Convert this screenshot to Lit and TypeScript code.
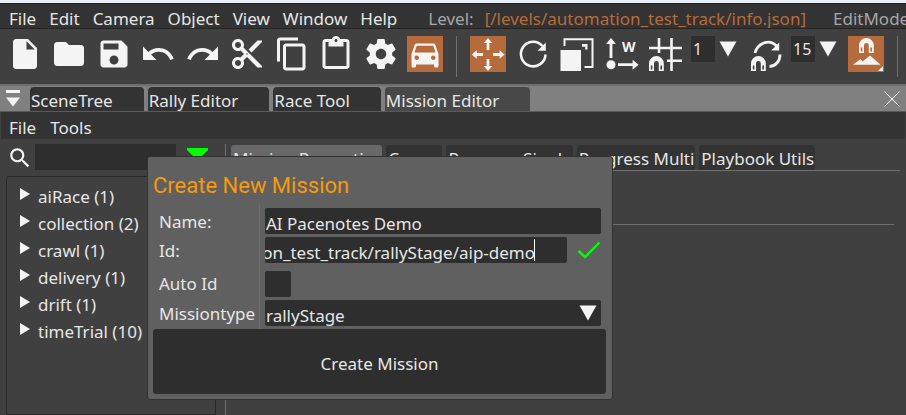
import { LitElement, html, svg, css } from "lit";
import { customElement, state } from "lit/decorators.js";
import { classMap } from "lit/directives/class-map.js";

const material: Record<string, string> = {
  file: "M6 2c-1.1 0-1.99.9-1.99 2L4 20c0 1.1.89 2 1.99 2H18c1.1 0 2-.9 2-2V8l-6-6H6zm7 7V3.5L18.5 9H13z",
  folder: "M10 4H4c-1.1 0-1.99.9-1.99 2L2 18c0 1.1.9 2 2 2h16c1.1 0 2-.9 2-2V8c0-1.1-.9-2-2-2h-8l-2-2z",
  save: "M17 3H5c-1.11 0-2 .9-2 2v14c0 1.1.89 2 2 2h14c1.1 0 2-.9 2-2V7l-4-4zm-5 16c-1.66 0-3-1.34-3-3s1.34-3 3-3 3 1.34 3 3-1.34 3-3 3zm3-10H5V5h10v4z",
  undo: "M12.5 8c-2.65 0-5.05.99-6.9 2.6L2 7v9h9l-3.62-3.62c1.39-1.16 3.16-1.88 5.12-1.88 3.54 0 6.55 2.31 7.6 5.5l2.37-.78C21.08 11.03 17.15 8 12.5 8z",
  redo: "M18.4 10.6C16.55 8.99 14.15 8 11.5 8c-4.65 0-8.58 3.03-9.96 7.22L3.9 16c1.05-3.19 4.05-5.5 7.6-5.5 1.95 0 3.73.72 5.12 1.88L13 16h9V7l-3.6 3.6z",
  cut: "M9.64 7.64c.23-.5.36-1.05.36-1.64 0-2.21-1.79-4-4-4S2 3.79 2 6s1.79 4 4 4c.59 0 1.14-.13 1.64-.36L10 12l-2.36 2.36C7.14 14.13 6.59 14 6 14c-2.21 0-4 1.79-4 4s1.79 4 4 4 4-1.79 4-4c0-.59-.13-1.14-.36-1.64L12 14l7 7h3v-1L9.64 7.64zM6 8c-1.1 0-2-.89-2-2s.9-2 2-2 2 .89 2 2-.9 2-2 2zm0 12c-1.1 0-2-.89-2-2s.9-2 2-2 2 .89 2 2-.9 2-2 2zm6-7.5c-.28 0-.5-.22-.5-.5s.22-.5.5-.5.5.22.5.5-.22.5-.5.5zM19 3l-6 6 2 2 7-7V3z",
  copy: "M16 1H4c-1.1 0-2 .9-2 2v14h2V3h12V1zm3 4H8c-1.1 0-2 .9-2 2v14c0 1.1.9 2 2 2h11c1.1 0 2-.9 2-2V7c0-1.1-.9-2-2-2zm0 16H8V7h11v14z",
  paste: "M19 2h-4.18C14.4.84 13.3 0 12 0c-1.3 0-2.4.84-2.82 2H5c-1.1 0-2 .9-2 2v16c0 1.1.9 2 2 2h14c1.1 0 2-.9 2-2V4c0-1.1-.9-2-2-2zm-7 0c.55 0 1 .45 1 1s-.45 1-1 1-1-.45-1-1 .45-1 1-1zm7 18H5V4h2v3h10V4h2v16z",
  settings: "M19.43 12.98c.04-.32.07-.64.07-.98s-.03-.66-.07-.98l2.11-1.65c.19-.15.24-.42.12-.64l-2-3.46c-.12-.22-.39-.3-.61-.22l-2.49 1c-.52-.4-1.08-.73-1.69-.98l-.38-2.65C14.46 2.18 14.25 2 14 2h-4c-.25 0-.46.18-.49.42l-.38 2.65c-.61.25-1.17.59-1.69.98l-2.49-1c-.23-.09-.49 0-.61.22l-2 3.46c-.13.22-.07.49.12.64l2.11 1.65c-.04.32-.07.65-.07.98s.03.66.07.98l-2.11 1.65c-.19.15-.24.42-.12.64l2 3.46c.12.22.39.3.61.22l2.49-1c.52.4 1.08.73 1.69.98l.38 2.65c.03.24.24.42.49.42h4c.25 0 .46-.18.49-.42l.38-2.65c.61-.25 1.17-.59 1.69-.98l2.49 1c.23.09.49 0 .61-.22l2-3.46c.12-.22.07-.49-.12-.64l-2.11-1.65zM12 15.5c-1.93 0-3.5-1.57-3.5-3.5s1.57-3.5 3.5-3.5 3.5 1.57 3.5 3.5-1.57 3.5-3.5 3.5z",
  car: "M18.92 6.01C18.72 5.42 18.16 5 17.5 5h-11c-.66 0-1.21.42-1.42 1.01L3 12v8c0 .55.45 1 1 1h1c.55 0 1-.45 1-1v-1h12v1c0 .55.45 1 1 1h1c.55 0 1-.45 1-1v-8l-2.08-5.99zM6.5 16c-.83 0-1.5-.67-1.5-1.5S5.67 13 6.5 13s1.5.67 1.5 1.5S7.33 16 6.5 16zm11 0c-.83 0-1.5-.67-1.5-1.5s.67-1.5 1.5-1.5 1.5.67 1.5 1.5-.67 1.5-1.5 1.5zM5 11l1.5-4.5h11L19 11H5z",
  search: "M15.5 14h-.79l-.28-.27C15.41 12.59 16 11.11 16 9.5 16 5.91 13.09 3 9.5 3S3 5.91 3 9.5 5.91 16 9.5 16c1.61 0 3.09-.59 4.23-1.57l.27.28v.79l5 4.99L20.49 19l-4.99-5zm-6 0C7.01 14 5 11.99 5 9.5S7.01 5 9.5 5 14 7.01 14 9.5 11.99 14 9.5 14z",
};

const magnet = (x: number, y: number) => svg`
  <g transform="translate(${x} ${y})">
    <path fill-rule="evenodd" d="M0 15V7.5a7.4 7.4 0 0 1 14.8 0V15h-5V7.5a2.4 2.4 0 0 0-4.8 0V15zM1.8 9.5v4h1.6v-4zm9.6 0v4h1.6v-4z"></path>
  </g>`;

const custom: Record<string, unknown> = {
  move: svg`
    <path d="M18 2l4.200 5h-2.800v7h-2.800V7h-2.800zM18 35l4.200-5h-2.800v-7h-2.800v7h-2.800zM1.800 18.500l5-4.200v2.800H13v2.800H6.800v2.800zM34.600 18.500l-5-4.200v2.800H23v2.800h6.600v2.800z"></path>`,
  rotate: svg`
    <path class="line" stroke-width="2.600" d="M27.500 10A12.300 12.300 0 1 0 30.500 18.500"></path>
    <path d="M30.800 6.500v8.300h-8.300z"></path>`,
  scale: svg`
    <path d="M1.500 14H22v21H1.500z"></path>
    <path class="line" stroke-width="2" d="M5.500 10V3.300h28V31h-8"></path>
    <path d="M23 8h5.500v5.500h-2.300v-2.800H23z"></path>`,
  world: svg`
    <circle cx="7" cy="28.700" r="4.500"></circle>
    <path d="M7 2l5 6H8.400v14H5.600V8H2zM34.600 28.700l-6-5v3.600H14v2.800h14.600v3.600z"></path>
    <text x="18" y="16" class="glyph">W</text>`,
  grid: svg`
    <path class="line" stroke-width="2.600" d="M11 2v15M23.500 2v33M1 12h33M19 24.700h15"></path>
    ${magnet(1, 20)}`,
  angle: svg`
    <path class="line" stroke-width="2.800" d="M7 17C9 8 21 1.500 29 10.500M32 18.500C32 25 28 30 21.500 30.500"></path>
    <path d="M31.200 6.500v8h-8z"></path>
    ${magnet(3, 20)}`,
  terrain: svg`
    ${magnet(11, 2)}
    <path d="M5 28.700L12.500 23l2 2.500 7.500-6L32.500 28.700zM35 30v5h-5z"></path>`,
};

const icon = (name: string) =>
  material[name]
    ? html`<svg class="icon" viewBox="0 0 24 24" aria-hidden="true"><path d=${material[name]}></path></svg>`
    : html`<svg class="icon" viewBox="0 0 36 36" aria-hidden="true">${custom[name]}</svg>`;

const fileTools = ["file", "folder", "save", "undo", "redo", "cut", "copy", "paste", "settings", "car"];
const gizmoTools = ["move", "rotate", "scale", "world", "grid"];

@customElement("app-root")
export class AppRoot extends LitElement {
  @state() private missionName = "AI Pacenotes Demo";
  @state() private missionId = "levels/automation_test_track/rallyStage/aip-demo";

  static styles = css`
    :host {
      display: block;
      position: relative;
      min-height: 100vh;
      box-sizing: border-box;
      overflow: hidden;
      background: #404040;
      border-top: 3px solid #eaf0f8;
      color: #e6e6e6;
      font: 17px/24px "Noto Sans", "Open Sans", sans-serif;
    }
    * { box-sizing: border-box; }
    button, input, select {
      margin: 0;
      padding: 0;
      border: 0;
      border-radius: 0;
      background: none;
      color: inherit;
      font: inherit;
      outline: none;
      appearance: none;
    }
    svg { display: block; fill: #f4f4f4; }
    .line { fill: none; stroke: #f4f4f4; }
    .glyph { font: bold 14px "Noto Sans", sans-serif; }
    .menubar {
      display: flex;
      gap: 13px;
      height: 26px;
      padding: 3px 0 0 9px;
      background: #333;
      border-top: 1px solid #1c1c1c;
      border-bottom: 1px solid #242424;
      line-height: 24px;
      white-space: nowrap;
      overflow: hidden;
    }
    .menubar button { flex: none; line-height: 24px; }
    .level { display: flex; gap: 11px; margin-left: 18px; color: #a6a6a6; }
    .path { color: #b66b3d; }
    .mode { margin-left: 14px; color: #a6a6a6; }
    .toolbar {
      display: flex;
      height: 55px;
      padding: 7px 7px 0;
      overflow: hidden;
    }
    .toolbar > * { flex: none; }
    .tools { display: flex; justify-content: space-between; }
    .files { width: 436px; }
    .gizmos { width: 214px; margin-right: 7px; }
    .tool { width: 36px; height: 36px; }
    .tool.on { background: #b66b3d; }
    .icon { width: 36px; height: 36px; }
    .rule { width: 1px; height: 41px; margin: 0 13px; background: #6e6e6e; }
    .snap { display: flex; margin-right: 7px; }
    .snap input { width: 24px; height: 26px; padding-left: 2px; background: #2e2e2e; font-size: 16px; }
    .drop { width: 26px; height: 26px; display: grid; place-items: center; }
    .angle { margin-right: 7px; }
    .dock {
      display: flex;
      align-items: flex-end;
      gap: 4px;
      height: 28px;
      background: #808080;
      border-top: 2px solid #6e6e6e;
      border-bottom: 1px solid #5a5a5a;
    }
    .pin { width: 26px; height: 25px; display: grid; place-items: center; }
    .tab {
      height: 24px;
      padding: 3px 31px 0 1px;
      background: #333;
      border-radius: 4px 4px 0 0;
      line-height: 22px;
      white-space: nowrap;
    }
    .tab.current { background: #484848; }
    .close { width: 26px; height: 25px; display: grid; place-items: center; margin: 0 1px 0 auto; }
    .submenu {
      display: flex;
      gap: 14px;
      height: 27px;
      margin: 0 1px;
      padding: 4px 8px 0;
      background: #333;
    }
    .submenu button { line-height: 24px; height: 24px; }
    .body { display: flex; padding: 5px 6px 0; min-height: 276px; }
    .side { width: 210px; flex: none; display: flex; flex-direction: column; }
    .filter { display: flex; height: 26px; }
    .filter label { width: 29px; padding: 1px 0 0 1px; }
    .filter .icon { width: 26px; height: 26px; }
    .filter input { width: 141px; height: 26px; background: #2e2e2e; }
    .funnel { margin: 4px 0 0 11px; width: 22px; height: 22px; }
    .tree {
      flex: 1;
      margin: 6px 0 0;
      padding: 6px 0 0 12px;
      border: 1px solid #2a2a2a;
      border-radius: 3px 3px 0 0;
      list-style: none;
    }
    .tree li { display: flex; height: 27px; gap: 8px; }
    .tree svg { margin-top: 5px; }
    .tree button { line-height: 27px; height: 27px; }
    .main { flex: 1; margin-left: 9px; padding-left: 5px; border-left: 1px solid #6e6e6e; }
    .pages { display: flex; gap: 4px; height: 27px; padding-top: 1px; border-bottom: 1px solid #6e6e6e; }
    .page {
      height: 25px;
      padding: 3px 1px 0 2px;
      background: #333;
      border-radius: 3px 3px 0 0;
      line-height: 22px;
      white-space: nowrap;
    }
    .page.current { background: #686868; }
    .divider { margin: 53px 6px 0 0; border: 0; border-top: 1px solid #6e6e6e; }
    .popup {
      position: absolute;
      left: 147px;
      top: 153px;
      width: 466px;
      padding: 11px 6px 5px 5px;
      background: #606060;
      border: 1px solid #333;
      border-radius: 3px;
    }
    h2 { margin: 0; color: #f79a0c; font: 22px/36px "Roboto", sans-serif; }
    .fields { display: grid; grid-template-columns: 106px 1fr; }
    .fields label { padding: 1px 0 0 6px; line-height: 26px; white-space: nowrap; }
    .names, .values { display: grid; grid-template-rows: 26px 26px 31px 26px; row-gap: 3px; padding: 4px 0 3px; }
    .values { padding: 4px 5px 3px; border-left: 1px solid #6e6e6e; }
    .values input, .values select {
      height: 26px;
      width: 100%;
      background-color: #2e2e2e;
      border-radius: 2px;
      padding: 4px 2px 0 1px;
    }
    .idrow { display: grid; grid-template-columns: 1fr 34px; align-items: center; }
    .idrow svg { margin-left: 10px; }
    .values .id {
      padding: 4px 32px 0 0;
      background-image: linear-gradient(#fff, #fff);
      background-size: 1px 22px;
      background-position: right 32px top 2px;
      background-repeat: no-repeat;
    }
    .auto { align-self: end; }
    .values .box { width: 26px; }
    .combo { display: grid; grid-template-columns: 1fr 26px; }
    .combo select { grid-area: 1 / 1 / 2 / 3; }
    .combo svg { grid-area: 1 / 2; place-self: center; pointer-events: none; }
    .create { width: 100%; height: 65px; display: block; background: #2e2e2e; border-radius: 3px; padding-top: 4px; }
  `;

  firstUpdated() {
    const field = this.renderRoot.querySelector<HTMLInputElement>(".id")!;
    field.scrollLeft = field.scrollWidth;
    document.fonts.ready.then(() => (field.scrollLeft = field.scrollWidth));
  }

  private tool(name: string, on = false) {
    return html`<button class=${classMap({ tool: true, on })} aria-label=${name}>${icon(name)}</button>`;
  }

  private arrow() {
    return html`<svg width="18" height="16" viewBox="0 0 18 16" aria-hidden="true"><path d="M.5 .5h17L9 15.500z"></path></svg>`;
  }

  render() {
    return html`
      <nav class="menubar">
        ${["File", "Edit", "Camera", "Object", "View", "Window", "Help"].map((m) => html`<button>${m}</button>`)}
        <span class="level"><span>Level:</span><span class="path">[/levels/automation_test_track/info.json]</span></span>
        <span class="mode">EditMode</span>
      </nav>

      <div class="toolbar">
        <div class="tools files">${fileTools.map((n) => this.tool(n, n === "car"))}</div>
        <div class="rule"></div>
        <div class="tools gizmos">${gizmoTools.map((n) => this.tool(n, n === "move"))}</div>
        <div class="snap">
          <input aria-label="Grid snap" value="1" />
          <button class="drop" aria-label="Grid snap sizes">${this.arrow()}</button>
        </div>
        <div class="angle">${this.tool("angle")}</div>
        <div class="snap">
          <input aria-label="Rotation snap" value="15" />
          <button class="drop" aria-label="Rotation snap sizes">${this.arrow()}</button>
        </div>
        ${this.tool("terrain", true)}
        <div class="rule"></div>
      </div>

      <div class="dock">
        <button class="pin" aria-label="Window list">
          <svg width="14" height="17" viewBox="0 0 14 17"><path d="M0 0h14v3H0zM0 7.500h14L7 16.500z"></path></svg>
        </button>
        ${["SceneTree", "Rally Editor", "Race Tool", "Mission Editor"].map(
          (t) => html`<button class=${classMap({ tab: true, current: t === "Mission Editor" })}>${t}</button>`
        )}
        <button class="close" aria-label="Close">
          <svg width="16" height="16" viewBox="0 0 16 16"><path class="line" d="M.5 .5l15 15M15.500 .5l-15 15"></path></svg>
        </button>
      </div>

      <nav class="submenu"><button>File</button><button>Tools</button></nav>

      <div class="body">
        <aside class="side">
          <div class="filter">
            <label for="search" aria-label="Search">${icon("search")}</label>
            <input id="search" type="search" />
            <svg class="funnel" viewBox="0 0 22 22" aria-hidden="true"><path fill="#0f0" d="M0 0h21v2l-8 8v11l-5-4v-7L0 2z"></path></svg>
          </div>
          <ul class="tree">
            ${["aiRace (1)", "collection (2)", "crawl (1)", "delivery (1)", "drift (1)", "timeTrial (10)"].map(
              (t) => html`<li>
                <svg width="11" height="12" viewBox="0 0 11 12" aria-hidden="true"><path d="M1 0v12l10-6z"></path></svg>
                <button>${t}</button>
              </li>`
            )}
          </ul>
        </aside>
        <main class="main">
          <div class="pages">
            ${["Mission Properties", "Career", "Progress Single", "Progress Multi", "Playbook Utils"].map(
              (t, i) => html`<button class=${classMap({ page: true, current: i === 0 })}>${t}</button>`
            )}
          </div>
          <hr class="divider" />
        </main>
      </div>

      <form class="popup" @submit=${(e: Event) => e.preventDefault()}>
        <h2>Create New Mission</h2>
        <div class="fields">
          <div class="names">
            <label for="name">Name:</label>
            <label for="id">Id:</label>
            <label for="auto" class="auto">Auto Id</label>
            <label for="type">Missiontype</label>
          </div>
          <div class="values">
            <input id="name" .value=${this.missionName} />
            <div class="idrow">
              <input id="id" class="id" .value=${this.missionId} />
              <svg width="24" height="18" viewBox="0 0 24 18" aria-hidden="true"><path fill="none" stroke="#0f0" stroke-width="2.400" d="M1.500 10l6.500 6L22.500 1.500"></path></svg>
            </div>
            <input id="auto" class="box auto" type="checkbox" />
            <div class="combo">
              <select id="type"><option>rallyStage</option></select>
              ${this.arrow()}
            </div>
          </div>
        </div>
        <button class="create">Create Mission</button>
      </form>
    `;
  }
}
